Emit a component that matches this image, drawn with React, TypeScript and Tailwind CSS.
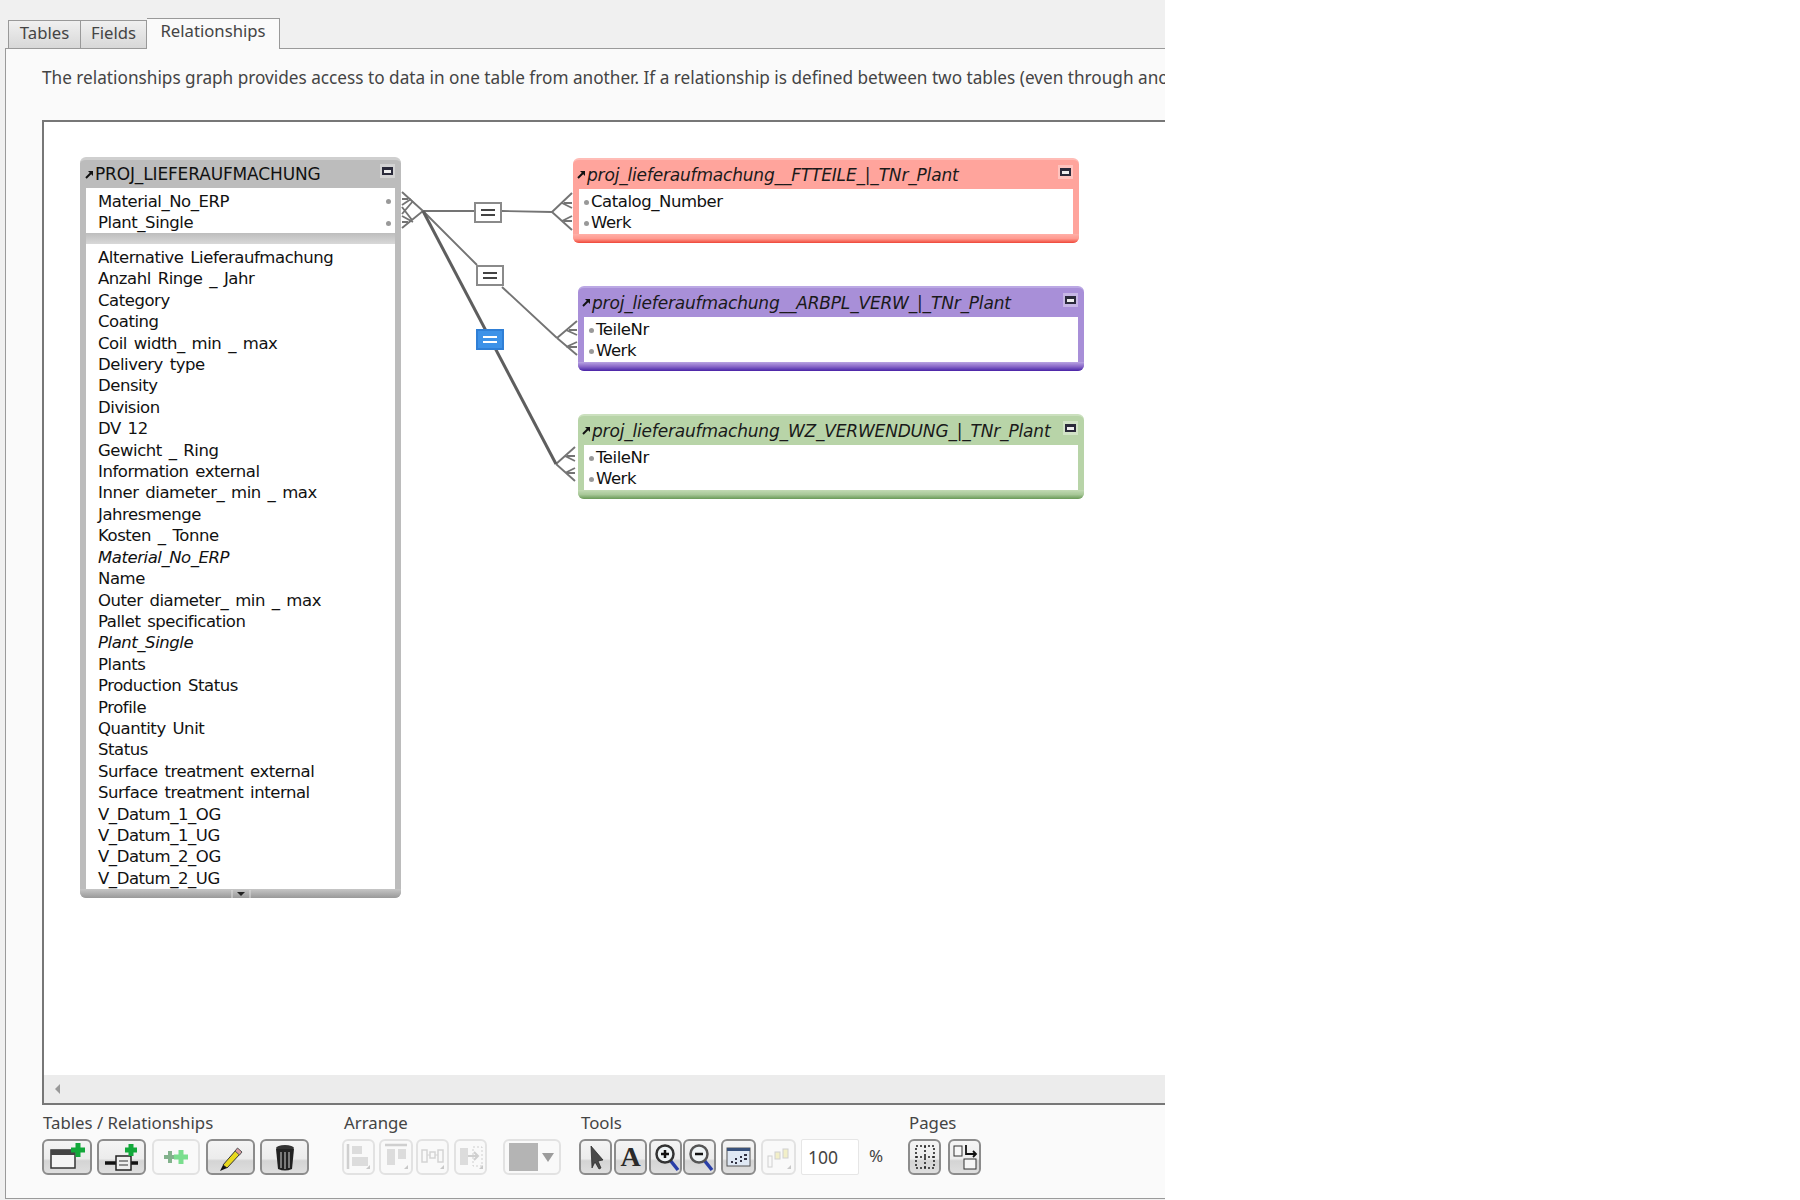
import React from "react";

const ui = { fontFamily: '"Noto Sans", "Open Sans", sans-serif' };
const mono = { fontFamily: '"DejaVu Sans", sans-serif' };

const keyFieldsMain = ["Material_No_ERP", "Plant_Single"];
const listFields: [string, boolean][] = [
  ["Alternative Lieferaufmachung", false],
  ["Anzahl Ringe _ Jahr", false],
  ["Category", false],
  ["Coating", false],
  ["Coil width_ min _ max", false],
  ["Delivery type", false],
  ["Density", false],
  ["Division", false],
  ["DV 12", false],
  ["Gewicht _ Ring", false],
  ["Information external", false],
  ["Inner diameter_ min _ max", false],
  ["Jahresmenge", false],
  ["Kosten _ Tonne", false],
  ["Material_No_ERP", true],
  ["Name", false],
  ["Outer diameter_ min _ max", false],
  ["Pallet specification", false],
  ["Plant_Single", true],
  ["Plants", false],
  ["Production Status", false],
  ["Profile", false],
  ["Quantity Unit", false],
  ["Status", false],
  ["Surface treatment external", false],
  ["Surface treatment internal", false],
  ["V_Datum_1_OG", false],
  ["V_Datum_1_UG", false],
  ["V_Datum_2_OG", false],
  ["V_Datum_2_UG", false],
];

function Shortcut() {
  return (
    <svg width="9" height="9" viewBox="0 0 9 9" className="shrink-0">
      <path d="M1 8 L6.5 2.5" stroke="#111" strokeWidth="1.9" />
      <path d="M3 1 H8 V6 Z" fill="#111" />
    </svg>
  );
}

function Collapse() {
  return (
    <svg width="15" height="14" viewBox="0 0 15 14" className="shrink-0">
      <rect x="0" y="0" width="15" height="14" fill="#ffffff" fillOpacity="0.35" />
      <rect x="2" y="3" width="11" height="8" fill="#2a2a3a" />
      <rect x="4" y="6" width="7" height="3" fill="#eeeeee" />
    </svg>
  );
}

function SideTable(p: {
  cls: string;
  title: string;
  fields: string[];
  head: string;
  bottom: string;
}) {
  return (
    <div className={`absolute rounded-[6px] flex flex-col overflow-hidden border-t-2 ${p.cls} ${p.head}`} style={mono}>
      <div className="h-[30px] flex items-center pl-[4px] pr-[6px] gap-[1px]">
        <Shortcut />
        <span className="italic text-[17px] tracking-[-0.18px] text-[#1a1a1a] whitespace-nowrap flex-1 pt-[3px]">{p.title}</span>
        <div className="-mt-[6px]">
          <Collapse />
        </div>
      </div>
      <div className="mx-[6px] flex-1 bg-white pt-[2px] pl-[5px]">
        {p.fields.map((f) => (
          <div key={f} className="flex items-center gap-[2px] h-[21.4px] text-[16.5px] tracking-[-0.45px] text-[#111]">
            <span className="w-[5px] h-[5px] rounded-full bg-[#999]" />
            <span>{f}</span>
          </div>
        ))}
      </div>
      <div className={`h-[9px] ${p.bottom}`} />
    </div>
  );
}

function MainTable() {
  return (
    <div
      className="absolute left-[36px] top-[35px] w-[321px] h-[741px] rounded-[6px] bg-[#bcbcbc] flex flex-col overflow-hidden border-t-[3px] border-t-[#cfcfcf]"
      style={mono}
    >
      <div className="h-[28px] flex items-center pl-[5px] pr-[6px] gap-[1px]">
        <Shortcut />
        <span className="text-[17px] tracking-[-0.15px] text-[#111] flex-1 whitespace-nowrap pt-[1px]">PROJ_LIEFERAUFMACHUNG</span>
        <div className="-mt-[7px]">
          <Collapse />
        </div>
      </div>
      <div className="mx-[6px] bg-white h-[45px] pt-[3px] pl-[12px] pr-[4px]">
        {keyFieldsMain.map((f) => (
          <div key={f} className="h-[21.4px] leading-[21.4px] text-[16.5px] tracking-[-0.45px] text-[#111] flex items-center justify-between">
            <span>{f}</span>
            <span className="w-[5px] h-[5px] rounded-full bg-[#999]" />
          </div>
        ))}
      </div>
      <div className="h-[11px] bg-linear-to-b from-[#bdbdbd] to-[#d8d8d8] mx-[6px]" />
      <div className="mx-[6px] bg-white h-[645px] pt-[3px] pl-[12px] overflow-hidden">
        {listFields.map(([f, it], i) => (
          <div key={i} className={`h-[21.41px] leading-[21.41px] text-[16.5px] tracking-[-0.45px] [word-spacing:2px] text-[#111] whitespace-nowrap ${it ? "italic" : ""}`}>
            {f}
          </div>
        ))}
      </div>
      <div className="flex-1 bg-linear-to-b from-[#c6c6c6] to-[#999999] flex justify-center items-center">
        <svg width="20" height="8" viewBox="0 0 20 8">
          <path d="M1 0 V8 M19 0 V8" stroke="#dddddd" strokeWidth="1" />
          <path d="M6 2 H14 L10 6 Z" fill="#222" />
        </svg>
      </div>
    </div>
  );
}

function Lines() {
  const c = "#747474";
  return (
    <svg className="absolute left-0 top-0" width="1121" height="953" viewBox="44 122 1121 953" fill="none">
      <g stroke={c} strokeWidth="1.9">
        <path d="M402 192 L423 211 L402 228" />
        <path d="M402 205 L411 199 M402 199 H408 M402 216 L413 222 M402 222 H408 M402 207 L412 220 M402 214 L413 201" />
        <path d="M423 211 H474 M502 211 L552 212" />
        <path d="M552 212 L572 193 M552 212 L572 230 M562 203 L572 208 M564 203 H572 M562 221 L572 216 M564 221 H572" />
        <path d="M423 211 L477 265 M502 287 L557 338" />
        <path d="M557 338 L577 321 M557 338 L577 355 M566 330 L577 335 M569 330 H577 M566 347 L577 342 M569 347 H577" />
        <path d="M556 464 L575 447 M556 464 L575 481 M565 456 L575 461 M567 456 H575 M565 473 L575 468 M567 473 H575" />
      </g>
      <path d="M423 211 L556 464" stroke="#5e5e5e" strokeWidth="3" />
    </svg>
  );
}

function EqBox(p: { cls: string; blue?: boolean }) {
  return (
    <div
      className={`absolute w-[28px] h-[21px] flex flex-col items-center justify-center gap-[3px] border-2 ${p.cls} ${
        p.blue ? "bg-[#3d92e8] border-[#2f7fd6]" : "bg-white border-[#8a8a8a]"
      }`}
    >
      <span className={`w-[14px] h-[2px] ${p.blue ? "bg-white" : "bg-[#444]"}`} />
      <span className={`w-[14px] h-[2px] ${p.blue ? "bg-white" : "bg-[#444]"}`} />
    </div>
  );
}

function Btn(p: { cls: string; off?: boolean; children?: React.ReactNode }) {
  return (
    <div
      className={`h-[36px] rounded-[6px] border-2 shrink-0 flex items-center justify-center overflow-hidden ${p.cls} ${
        p.off
          ? "border-[#e2e2e2] bg-[#f9f9f9]"
          : "border-[#8c8c8c] bg-[linear-gradient(#f4f4f4_0%,#ececec_55%,#d4d4d4_62%,#dedede_100%)]"
      }`}
    >
      {p.children}
    </div>
  );
}

const plus = (x: number, y: number, a: number, w: number, col: string) => (
  <path d={`M${x - a} ${y} H${x + a} M${x} ${y - a} V${y + a}`} stroke={col} strokeWidth={w} />
);

function I(p: { w: number; children: React.ReactNode }) {
  return (
    <svg width={p.w} height="32" viewBox={`0 0 ${p.w} 32`} fill="none">
      {p.children}
    </svg>
  );
}

function Corner({ x }: { x: number }) {
  return <path d={`M${x} 28 h4 v-4 Z`} fill="#c8c8c8" />;
}

function Group(p: { label: string; cls: string; lab?: string; children: React.ReactNode }) {
  return (
    <div className={`flex flex-col ${p.cls}`}>
      <div className={`h-[24px] text-[16.8px] leading-[24px] text-[#444] whitespace-nowrap ${p.lab ?? "pl-[1px]"}`} style={ui}>
        {p.label}
      </div>
      <div className="flex items-center mt-[4px]">{p.children}</div>
    </div>
  );
}

export default function App() {
  return (
    <div className="w-[1800px] h-[1200px] bg-white flex overflow-hidden">
      <div className="w-[1165px] h-[1200px] bg-[#f0f0f0] flex flex-col" style={ui}>
        {/* tabs */}
        <div className="h-[48px] flex items-end pl-[8px] relative text-[#444] text-[16.7px]">
          <div className="w-[73px] h-[28px] border border-[#999] border-b-0 bg-linear-to-b from-[#f0f0f0] to-[#d8d8d8] flex items-center justify-center pb-[3px]">Tables</div>
          <div className="w-[66px] h-[28px] border border-[#999] border-l-0 border-b-0 bg-linear-to-b from-[#f0f0f0] to-[#d8d8d8] flex items-center justify-center pb-[3px]">Fields</div>
          <div className="w-[133px] h-[31px] border border-[#999] border-l-0 border-b-0 bg-[#fafafa] flex items-center justify-center relative top-[1px] z-10 pb-[6px]">Relationships</div>
        </div>
        {/* panel */}
        <div className="flex-1 ml-[5px] mb-[1px] border-l border-t border-b border-[#9a9a9a] bg-[#fafafa] flex flex-col overflow-hidden">
          <div className="h-[71px] pl-[36px] pt-[17px] text-[17.2px] leading-[24px] text-[#444] whitespace-nowrap overflow-hidden">
            The relationships graph provides access to data in one table from another. If a relationship is defined between two tables (even through another
          </div>
          {/* canvas */}
          <div className="ml-[36px] h-[985px] border-t-2 border-l-2 border-b-2 border-[#777] bg-white flex flex-col">
            <div className="flex-1 relative overflow-hidden" style={mono}>
              <Lines />
              <MainTable />
              <SideTable
                cls="left-[529px] top-[36px] w-[506px] h-[85px] border-t-[#ffbcb6]"
                title="proj_lieferaufmachung__FTTEILE_|_TNr_Plant"
                fields={["Catalog_Number", "Werk"]}
                head="bg-[#ffa49c]"
                bottom="bg-linear-to-b from-[#ffb0a8] via-[#ff9a90] to-[#ee4438]"
              />
              <SideTable
                cls="left-[534px] top-[164px] w-[506px] h-[85px] border-t-[#bba8e4]"
                title="proj_lieferaufmachung__ARBPL_VERW_|_TNr_Plant"
                fields={["TeileNr", "Werk"]}
                head="bg-[#a88fd8]"
                bottom="bg-linear-to-b from-[#b9a4e2] via-[#8a68c8] to-[#4a1fa6]"
              />
              <SideTable
                cls="left-[534px] top-[292px] w-[506px] h-[85px] border-t-[#cbe0be]"
                title="proj_lieferaufmachung_WZ_VERWENDUNG_|_TNr_Plant"
                fields={["TeileNr", "Werk"]}
                head="bg-[#b8d4a8]"
                bottom="bg-linear-to-b from-[#c2dab4] via-[#a8c898] to-[#6a9a58]"
              />
              <EqBox cls="left-[430px] top-[80px]" />
              <EqBox cls="left-[432px] top-[143px]" />
              <EqBox cls="left-[432px] top-[207px]" blue />
            </div>
            <div className="h-[28px] bg-[#ececec] flex items-center pl-[10px]">
              <svg width="8" height="12" viewBox="0 0 8 12">
                <path d="M6 1 L1 6 L6 11 Z" fill="#999999" />
              </svg>
            </div>
          </div>
          {/* toolbar */}
          <div className="flex-1 pl-[36px] pt-[6px] flex">
            <Group label="Tables / Relationships" cls="w-[267px]">
              <Btn cls="w-[50px]">
                <I w={46}>
                  <rect x="7" y="9" width="24" height="18" stroke="#333" strokeWidth="1.5" fill="#f4f4f4" />
                  <rect x="7" y="9" width="24" height="5" fill="#444" />
                  {plus(34, 9, 7, 5, "#12a83a")}
                </I>
              </Btn>
              <Btn cls="w-[49px] ml-[5px]">
                <I w={45}>
                  <path d="M6 22 H39" stroke="#111" strokeWidth="3.5" />
                  <rect x="17" y="15" width="15" height="14" fill="#eee" stroke="#222" strokeWidth="1.5" />
                  <path d="M20 20 H29 M20 24 H29" stroke="#333" />
                  {plus(32, 9, 6, 5, "#12a83a")}
                </I>
              </Btn>
              <Btn cls="w-[48px] ml-[6px]" off>
                <I w={44}>
                  {plus(16, 16, 6, 4, "#82b28c")}
                  <path d="M16 16 H24" stroke="#82b28c" strokeWidth="3" />
                  {plus(27, 16, 7, 5, "#7ade8e")}
                </I>
              </Btn>
              <Btn cls="w-[49px] ml-[6px]">
                <I w={45}>
                  <path d="M15 24 L28 9 L32 13 L19 27 Z" fill="#e8d81e" stroke="#333" strokeWidth="1" />
                  <path d="M27 10 L29.5 7 L34 11 L31.5 14 Z" fill="#d99aa0" stroke="#555" strokeWidth="1" />
                  <path d="M15 24 L12 30 L19 27 Z" fill="#111" />
                </I>
              </Btn>
              <Btn cls="w-[49px] ml-[5px]">
                <I w={45}>
                  <ellipse cx="23" cy="7" rx="9" ry="3" fill="#333" />
                  <path d="M14 8 L16 28 Q23 31 30 28 L32 8 Z" fill="#222" />
                  <path d="M19 11 V27 M23 11 V28 M27 11 V27" stroke="#999" strokeWidth="1.5" />
                </I>
              </Btn>
            </Group>
            <Group label="Arrange" cls="ml-[33px] w-[219px]" lab="pl-[2px]">
              <Btn cls="w-[33px]" off>
                <I w={29}>
                  <path d="M4 3 V28" stroke="#cfcfcf" strokeWidth="2.5" />
                  <rect x="8" y="5" width="10" height="8" fill="#dcdcdc" />
                  <rect x="8" y="16" width="16" height="9" fill="#dcdcdc" />
                  <Corner x={22} />
                </I>
              </Btn>
              <Btn cls="w-[34px] ml-[4px]" off>
                <I w={30}>
                  <path d="M4 4 H26" stroke="#cfcfcf" strokeWidth="2.5" />
                  <rect x="6" y="8" width="8" height="16" fill="#dcdcdc" />
                  <rect x="17" y="8" width="8" height="10" fill="#dcdcdc" />
                  <Corner x={23} />
                </I>
              </Btn>
              <Btn cls="w-[33px] ml-[3px]" off>
                <I w={29}>
                  <rect x="4" y="9" width="5" height="12" fill="none" stroke="#d4d4d4" strokeWidth="1.5" />
                  <rect x="12" y="11" width="5" height="6" fill="none" stroke="#d4d4d4" strokeWidth="1.5" />
                  <rect x="20" y="9" width="5" height="12" fill="none" stroke="#d4d4d4" strokeWidth="1.5" />
                  <path d="M9 14 H12 M17 14 H20" stroke="#d4d4d4" />
                  <Corner x={22} />
                </I>
              </Btn>
              <Btn cls="w-[33px] ml-[5px]" off>
                <I w={29}>
                  <rect x="4" y="7" width="8" height="17" fill="#dcdcdc" />
                  <path d="M12 15 H22 M18 11 L22 15 L18 19" stroke="#cfcfcf" strokeWidth="2" />
                  <rect x="17" y="6" width="9" height="19" stroke="#cfcfcf" strokeDasharray="2 2" />
                  <Corner x={23} />
                </I>
              </Btn>
              <Btn cls="w-[58px] ml-[16px] !justify-start pl-[4px]" off>
                <div className="w-[29px] h-[28px] bg-[#b4b4b4]" />
                <svg width="12" height="9" viewBox="0 0 12 9" className="ml-[4px]">
                  <path d="M0 0 H12 L6 9 Z" fill="#9c9c9c" />
                </svg>
              </Btn>
            </Group>
            <Group label="Tools" cls="ml-[18px] w-[330px]" lab="pl-[2px]">
              <Btn cls="w-[33px]">
                <I w={29}>
                  <path d="M10 5 L11 27 L14 21 L18 28 L20 27 L17 20 L22 19 Z" fill="#4a4a4a" stroke="#222" strokeWidth="0.7" />
                </I>
              </Btn>
              <Btn cls="w-[33px] ml-[2px]">
                <span className="text-[28px] leading-[30px] font-bold text-[#2a2a2a]" style={{ fontFamily: '"Liberation Serif", serif' }}>
                  A
                </span>
              </Btn>
              <Btn cls="w-[33px] ml-[2px]">
                <I w={29}>
                  <path d="M19 19 L27 29" stroke="#2a3fa8" strokeWidth="3.5" />
                  <circle cx="14" cy="13" r="8.5" fill="#eef3f5" stroke="#333" strokeWidth="2.5" />
                  {plus(14, 13, 4, 2.5, "#111")}
                </I>
              </Btn>
              <Btn cls="w-[33px] ml-[1px]">
                <I w={29}>
                  <path d="M19 19 L27 29" stroke="#2a3fa8" strokeWidth="3.5" />
                  <circle cx="14" cy="13" r="8.5" fill="#eef3f5" stroke="#555" strokeWidth="2.5" />
                  <path d="M10 13 H18" stroke="#111" strokeWidth="2.5" />
                </I>
              </Btn>
              <Btn cls="w-[35px] ml-[5px]">
                <I w={31}>
                  <rect x="4" y="7" width="23" height="18" fill="#dfe8f4" stroke="#555" />
                  <rect x="4" y="7" width="23" height="3" fill="#38507a" />
                  <path d="M8 20 h2 v2 h-2 Z M12 17 h2 v2 h-2 Z M12 21 h2 v2 h-2 Z M17 15 h2 v2 h-2 Z M17 19 h2 v2 h-2 Z M21 13 h3 v2 h-3 Z M21 17 h3 v2 h-3 Z" fill="#334" />
                </I>
              </Btn>
              <Btn cls="w-[35px] ml-[5px]" off>
                <I w={31}>
                  <rect x="5" y="15" width="4" height="11" stroke="#d0d0d0" />
                  <rect x="12" y="11" width="5" height="7" fill="#f2efc8" stroke="#d0d0d0" />
                  <rect x="20" y="8" width="5" height="9" fill="#f2efc8" stroke="#d0d0d0" />
                  <Corner x={24} />
                </I>
              </Btn>
              <div className="w-[58px] h-[36px] ml-[5px] bg-white border border-[#e6e6e6] rounded-[2px] flex items-center pl-[6px] text-[17.5px] text-[#444] shrink-0">100</div>
              <div className="w-[34px] text-center text-[17px] text-[#444] shrink-0 -mt-[3px]">%</div>
            </Group>
            <Group label="Pages" cls="ml-[-1px] w-[80px]">
              <Btn cls="w-[33px]">
                <I w={29}>
                  <rect x="6" y="5" width="18" height="22" stroke="#222" strokeWidth="1.6" strokeDasharray="2 2" />
                  <path d="M6 16 H24 M15 5 V27" stroke="#222" strokeWidth="1.6" strokeDasharray="2 2" />
                </I>
              </Btn>
              <Btn cls="w-[33px] ml-[7px]">
                <I w={29}>
                  <rect x="4" y="5" width="8" height="10" fill="#f6f6f6" stroke="#333" />
                  <rect x="14" y="18" width="12" height="10" fill="#f6f6f6" stroke="#333" />
                  <path d="M16 4 V13 H25 M23 10 L26 13 L23 16" stroke="#111" strokeWidth="1.8" />
                </I>
              </Btn>
            </Group>
          </div>
        </div>
      </div>
      <div className="flex-1" />
    </div>
  );
}
